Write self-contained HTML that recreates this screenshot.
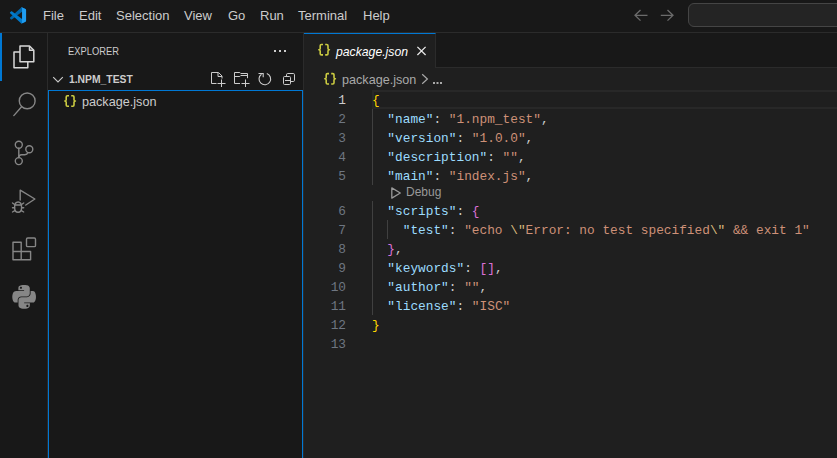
<!DOCTYPE html>
<html><head><meta charset="utf-8">
<style>
*{margin:0;padding:0;box-sizing:border-box}
html,body{width:837px;height:458px;overflow:hidden;background:#1f1f1f;font-family:"Liberation Sans",sans-serif;color:#ccc}
.abs{position:absolute}
svg{position:absolute;overflow:visible}
#title{left:0;top:0;width:837px;height:33px;background:#181818;border-bottom:1px solid #2b2b2b}
.menu{position:absolute;top:8px;font-size:13px;color:#ccc;white-space:nowrap}
#search{left:688px;top:3px;width:160px;height:24px;background:#242424;border:1px solid #454545;border-radius:6px}
#act{left:0;top:33px;width:48px;height:425px;background:#181818;border-right:1px solid #2b2b2b}
#actind{left:0;top:33px;width:2px;height:48px;background:#0078d4}
#side{left:48px;top:33px;width:256px;height:425px;background:#181818;border-right:1px solid #2b2b2b}
#focus{left:48px;top:90px;width:255px;height:400px;border:1px solid #0078d4}
.stitle{position:absolute;left:68px;top:45px;font-size:11px;transform:scaleX(0.85);transform-origin:0 0;color:#ccc;white-space:nowrap}
.sect{position:absolute;left:69px;top:73px;font-size:11px;transform:scaleX(0.94);transform-origin:0 0;font-weight:bold;color:#ccc;white-space:nowrap}
.file{position:absolute;left:82px;top:94px;font-size:13px;transform:scaleX(0.972);transform-origin:0 0;color:#ccc;white-space:nowrap}
#tabs{left:304px;top:33px;width:533px;height:35px;background:#181818;border-bottom:1px solid #2b2b2b}
#tab{left:304px;top:33px;width:132px;height:35px;background:#1f1f1f;border-top:1px solid #0078d4;border-right:1px solid #2b2b2b}
.tabname{position:absolute;left:336px;top:44px;font-size:13px;transform:scaleX(0.94);transform-origin:0 0;font-style:italic;color:#fff;white-space:nowrap}
.crumb{position:absolute;left:342px;top:72px;font-size:13px;transform:scaleX(0.97);transform-origin:0 0;color:#a9a9a9;white-space:nowrap}
.brace{position:absolute;font-family:"Liberation Mono",monospace;font-weight:bold;color:#cbcb41;white-space:nowrap;letter-spacing:-1px}
#curline{left:372px;top:90px;width:465px;height:19px;border:2px solid #282828;border-right:none}
.code{position:absolute;left:372px;font-family:"Liberation Mono",monospace;font-size:12.8px;white-space:pre;line-height:19px;color:#ccc;margin-top:1px}
.ln{position:absolute;left:310px;width:36px;font-family:"Liberation Mono",monospace;font-size:12.8px;line-height:19px;color:#6e7681;text-align:right;margin-top:1px}
.guide{position:absolute;width:1px;background:#404040}
.e{color:#d7ba7d}.k{color:#9cdcfe}.s{color:#ce9178}.y{color:#ffd700}.p{color:#da70d6}
.lens{position:absolute;left:391px;top:185px;height:16px;font-size:12px;color:#999;white-space:nowrap}
</style></head><body>
<div id="title" class="abs">
  <svg style="left:0;top:0" width="40" height="33">
    <g transform="translate(9.9 7.3) scale(0.162)">
    <path d="M96.46 10.8L75.86.88C73.47-.27 70.62.21 68.75 2.08L1.3 63.58C-.52 65.24-.51 68.09 1.3 69.75L6.81 74.75C8.3 76.1 10.53 76.2 12.13 74.99L93.36 13.37C96.09 11.3 100 13.25 100 16.67V16.43C100 14.03 98.62 11.84 96.46 10.8Z" fill="#0065a9"/>
    <path d="M96.46 89.2L75.86 99.12C73.47 100.27 70.62 99.79 68.75 97.92L1.3 36.42C-.52 34.76-.51 31.91 1.3 30.25L6.81 25.25C8.3 23.9 10.53 23.8 12.13 25.01L93.36 86.63C96.09 88.7 100 86.75 100 83.33V83.57C100 85.97 98.62 88.16 96.46 89.2Z" fill="#007acc"/>
    <path d="M75.86 99.13C73.47 100.27 70.62 99.79 68.75 97.92 71.06 100.22 75 98.59 75 95.33V4.67C75 1.41 71.06-.22 68.75 2.08 70.62.21 73.47-.27 75.86.87L96.46 10.78C98.62 11.82 100 14.01 100 16.41V83.59C100 85.99 98.62 88.18 96.46 89.22Z" fill="#1f9cf0"/>
    </g>
  </svg>
  <span class="menu" style="left:43px">File</span>
  <span class="menu" style="left:79px">Edit</span>
  <span class="menu" style="left:116px">Selection</span>
  <span class="menu" style="left:184px">View</span>
  <span class="menu" style="left:228px">Go</span>
  <span class="menu" style="left:260px">Run</span>
  <span class="menu" style="left:298px">Terminal</span>
  <span class="menu" style="left:363px">Help</span>
  <svg style="left:0;top:0" width="837" height="33">
    <g stroke="#6b6b6b" stroke-width="1.3" fill="none">
      <path d="M635 15.3 H647.5 M640.5 10 L635 15.3 L640.5 20.6"/>
      <path d="M673 15.3 H660.8 M667.5 10 L673 15.3 L667.5 20.6"/>
    </g>
  </svg>
  <div id="search" class="abs"></div>
</div>
<div id="act" class="abs"></div>
<div id="actind" class="abs"></div>
<svg style="left:0;top:0" width="48" height="458">
  <g stroke="#d7d7d7" stroke-width="1.5" fill="none" stroke-linejoin="round">
    <path d="M20 46 H29.5 L33.8 50.3 V61.8 H20 Z"/>
    <path d="M29.5 46.2 V50.3 H33.6"/>
    <path d="M20 52 H14 V67.8 H27.8 V61.8"/>
  </g>
  <g stroke="#868686" stroke-width="1.4" fill="none" stroke-linecap="round">
    <circle cx="27.2" cy="100.9" r="7.9"/>
    <path d="M21.6 106.8 L13.8 115.6"/>
    <circle cx="18.8" cy="144.7" r="3.5"/>
    <circle cx="18.8" cy="161.1" r="3.5"/>
    <circle cx="29.3" cy="149.2" r="3.5"/>
    <path d="M18.8 148.2 V157.6"/>
    <path d="M28 152.6 Q27.2 154.8 24.8 154.8 H21.5 Q18.8 154.8 18.8 157.6"/>
    <path d="M20.2 200 V190.2 L34.9 199 L25.8 205" stroke-linejoin="round"/>
    <path d="M14.6 207.5 Q14.6 202 18.1 202 Q21.6 202 21.6 207.5 Q21.6 212.3 18.1 212.3 Q14.6 212.3 14.6 207.5 Z"/>
    <path d="M14.8 205 H21.4 M12.5 203 L14.6 204.5 M23.7 203 L21.6 204.5 M12.5 207.7 H14.6 M21.6 207.7 H23.7 M12.5 212 L14.8 210.7 M23.7 212 L21.4 210.7"/>
    <rect x="26.5" y="238" width="9" height="8.6" rx="1.2"/>
    <path d="M13 242.2 H21.2 V251.5 H30.6 V259.8 H13 Z M13 251.5 H21.2 V259.8" stroke-linejoin="round"/>
  </g>
  <g transform="translate(11.8 284.8) scale(0.223)" fill="#868686">
    <path d="M54.9 0.5C50.5 0.5 46.2 0.9 42.5 1.5 31.5 3.5 29.5 7.5 29.5 14.9V24.6H55.1V27.9H19.8C12.4 27.9 5.9 32.4 3.9 40.9 1.6 50.6 1.5 56.7 3.9 66.8 5.7 74.4 10.1 79.8 17.5 79.8H26.3V68.2C26.3 59.8 33.6 52.4 42.2 52.4H67.8C74.9 52.4 80.6 46.5 80.6 39.4V14.9C80.6 7.9 74.7 2.7 67.8 1.5 63.3 0.8 58.7 0.5 54.9 0.5ZM41 8.4C43.7 8.4 45.8 10.6 45.8 13.3 45.8 16 43.7 18.2 41 18.2 38.4 18.2 36.2 16 36.2 13.3 36.2 10.6 38.4 8.4 41 8.4Z"/>
    <path d="M84.3 27.9V39.2C84.3 48 76.9 55.4 68.4 55.4H42.8C35.8 55.4 30 61.4 30 68.4V92.9C30 99.9 36 104 42.8 106 51 108.4 58.8 108.8 68.4 106 74.8 104.1 81.1 100.4 81.1 92.9V83.1H55.5V79.8H93.9C101.3 79.8 104.1 74.6 106.6 66.8 109.2 58.8 109.1 51.1 106.6 40.9 104.8 33.6 101.3 27.9 93.9 27.9ZM69.9 89.8C72.5 89.8 74.7 91.9 74.7 94.6 74.7 97.3 72.5 99.5 69.9 99.5 67.2 99.5 65.1 97.3 65.1 94.6 65.1 91.9 67.2 89.8 69.9 89.8Z"/>
  </g>
</svg>

<div id="side" class="abs"></div>
<div id="tabs" class="abs"></div>
<div id="tab" class="abs"></div>
<span class="stitle">EXPLORER</span>
<svg style="left:0;top:0" width="837" height="458">
  <defs>
    <g id="br" stroke="#cbcb41" stroke-width="1.6" fill="none" stroke-linejoin="round">
      <path d="M5 0.8 H3.4 Q2.2 0.8 2.2 2 V4.7 Q2.2 6 0.8 6 Q2.2 6 2.2 7.3 V10 Q2.2 11.2 3.4 11.2 H5"/>
      <path d="M7.2 0.8 H8.8 Q10 0.8 10 2 V4.7 Q10 6 11.4 6 Q10 6 10 7.3 V10 Q10 11.2 8.8 11.2 H7.2"/>
    </g>
  </defs>
  <g fill="#ccc">
    <rect x="274" y="50" width="2" height="2"/><rect x="279" y="50" width="2" height="2"/><rect x="284" y="50" width="2" height="2"/>
  </g>
  <g stroke="#ccc" stroke-width="1" fill="none">
    <path d="M53.2 77.2 L58 82 L62.8 77.2" stroke-width="1.1"/>
    <path d="M216.5 83.5 H211.5 V72.5 H218.5 L222 76 V78.5 M218 72.8 V76.5 H222"/>
    <path d="M217.5 83.5 H225.5 M221.5 79.5 V87"/>
    <path d="M240 83.5 H234.5 V72.5 H239.8 L240.8 73.5 H247.5 V78.2 M234.5 76.5 H239.8 L240.8 75.5 H247.5"/>
    <path d="M241.5 83.5 H249.5 M245.5 79.5 V87"/>
    <path d="M266.8 73.5 A5.8 5.8 0 1 1 261.5 74.2" stroke-width="1.1"/>
    <path d="M258.5 73.5 H263.2 V77.2" stroke-width="1.1"/>
    <path d="M286.5 76.5 V74.7 Q286.5 73.5 287.7 73.5 H293.3 Q294.5 73.5 294.5 74.7 V80.3 Q294.5 81.5 293.3 81.5 H290.5"/>
    <rect x="283.5" y="76.5" width="7" height="8" rx="1.1"/>
    <path d="M285 80.5 H290"/>
  </g>
  <use href="#br" x="64" y="95"/>
  <use href="#br" x="318" y="43.7"/>
  <use href="#br" x="324" y="72.8"/>
  <path d="M417.4 46.9 L425.6 55 M425.6 46.9 L417.4 55" stroke="#e8e8e8" stroke-width="1.3"/>
  <path d="M422.2 74.2 L427.4 79 L422.2 83.8" stroke="#a9a9a9" stroke-width="1.2" fill="none"/>
  <g fill="#a9a9a9"><rect x="433" y="82" width="2" height="2"/><rect x="436.5" y="82" width="2" height="2"/><rect x="440" y="82" width="2" height="2"/></g>
</svg>
<span class="sect">1.NPM_TEST</span>
<div id="focus" class="abs"></div>
<span class="file">package.json</span>

<span class="tabname">package.json</span>
<span class="crumb">package.json</span>

<div id="curline" class="abs"></div>
<div class="guide" style="left:372px;top:109px;height:76px"></div>
<div class="guide" style="left:372px;top:201px;height:114px"></div>
<div class="guide" style="left:387px;top:220px;height:19px"></div>

<div class="ln" style="top:90px;color:#ccc">1</div>
<div class="ln" style="top:109px">2</div>
<div class="ln" style="top:128px">3</div>
<div class="ln" style="top:147px">4</div>
<div class="ln" style="top:166px">5</div>
<div class="ln" style="top:201px">6</div>
<div class="ln" style="top:220px">7</div>
<div class="ln" style="top:239px">8</div>
<div class="ln" style="top:258px">9</div>
<div class="ln" style="top:277px">10</div>
<div class="ln" style="top:296px">11</div>
<div class="ln" style="top:315px">12</div>
<div class="ln" style="top:334px">13</div>

<div class="code" style="top:90px"><span class="y">{</span></div>
<div class="code" style="top:109px">  <span class="k">"name"</span>: <span class="s">"1.npm_test"</span>,</div>
<div class="code" style="top:128px">  <span class="k">"version"</span>: <span class="s">"1.0.0"</span>,</div>
<div class="code" style="top:147px">  <span class="k">"description"</span>: <span class="s">""</span>,</div>
<div class="code" style="top:166px">  <span class="k">"main"</span>: <span class="s">"index.js"</span>,</div>
<svg style="left:0;top:0" width="837" height="458">
  <path d="M391.8 187.9 L400.3 193 L391.8 198.1 Z" stroke="#999" stroke-width="1.3" fill="none" stroke-linejoin="round"/>
</svg>
<span class="lens" style="left:406px">Debug</span>
<div class="code" style="top:201px">  <span class="k">"scripts"</span>: <span class="p">{</span></div>
<div class="code" style="top:220px">    <span class="k">"test"</span>: <span class="s">"echo <span class="e">\"</span>Error: no test specified<span class="e">\"</span> &amp;&amp; exit 1"</span></div>
<div class="code" style="top:239px">  <span class="p">}</span>,</div>
<div class="code" style="top:258px">  <span class="k">"keywords"</span>: <span class="p">[]</span>,</div>
<div class="code" style="top:277px">  <span class="k">"author"</span>: <span class="s">""</span>,</div>
<div class="code" style="top:296px">  <span class="k">"license"</span>: <span class="s">"ISC"</span></div>
<div class="code" style="top:315px"><span class="y">}</span></div>
</body></html>
